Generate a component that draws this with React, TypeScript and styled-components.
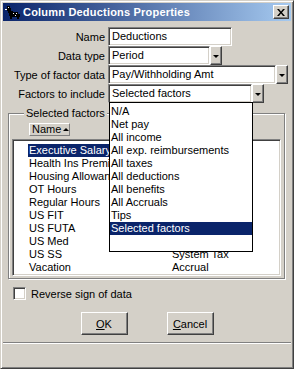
import styled, { createGlobalStyle } from 'styled-components';

const GlobalStyle = createGlobalStyle`
  html, body {
    margin: 0;
    padding: 0;
    background: #d4d0c8;
  }
  body {
    font-family: "Liberation Sans", Arial, sans-serif;
    font-size: 11px;
    color: #000;
  }
`;

const FACE = '#d4d0c8';

const Window = styled.div`
  box-sizing: border-box;
  width: 294px;
  height: 369px;
  background: ${FACE};
  border-style: solid;
  border-width: 1px;
  border-color: ${FACE} #404040 #404040 ${FACE};
  box-shadow: inset 1px 1px 0 #fff, inset -1px -1px 0 #808080;
  padding: 2px;
  display: flex;
  flex-direction: column;
`;

const TitleBar = styled.div`
  height: 18px;
  display: flex;
  align-items: center;
  padding: 0 2px 0 2px;
  background: linear-gradient(to right, #0a246a, #a6caf0);
  color: #fff;
  font-weight: bold;
  font-size: 11px;
`;

const TitleText = styled.span`
  flex: 1;
  margin-left: 2px;
  letter-spacing: 0.2px;
`;

const CloseButton = styled.div`
  box-sizing: border-box;
  width: 16px;
  height: 14px;
  background: ${FACE};
  border: 1px solid;
  border-color: #fff #404040 #404040 #fff;
  box-shadow: inset -1px -1px 0 #808080;
  display: flex;
  align-items: center;
  justify-content: center;
`;

const Body = styled.div`
  flex: 1;
  display: flex;
  flex-direction: column;
  padding-top: 6px;
`;

const Form = styled.div`
  display: grid;
  grid-template-columns: 102px auto;
  column-gap: 3px;
  grid-auto-rows: 19px;
  align-items: center;
`;

const Label = styled.div`
  text-align: right;
  white-space: nowrap;
`;

const FieldWrap = styled.div`
  position: relative;
  display: flex;
  height: 19px;
`;

const Field = styled.div<{ $w: number }>`
  box-sizing: border-box;
  width: ${(p) => p.$w}px;
  height: 19px;
  background: #fff;
  border: 1px solid;
  border-color: #808080 #fff #fff #808080;
  box-shadow: inset 1px 1px 0 #404040, inset -1px -1px 0 ${FACE};
  padding: 0 3px;
  line-height: 17px;
  white-space: nowrap;
  overflow: hidden;
`;

const DropButton = styled.div`
  box-sizing: border-box;
  width: 12px;
  height: 19px;
  background: ${FACE};
  border: 1px solid;
  border-color: #fff #404040 #404040 #fff;
  box-shadow: inset -1px -1px 0 #808080;
  display: flex;
  align-items: center;
  justify-content: center;
`;

const Arrow = styled.div`
  width: 0;
  height: 0;
  border-left: 3px solid transparent;
  border-right: 3px solid transparent;
  border-top: 3px solid #000;
  margin-top: 1px;
`;

const Popup = styled.div`
  position: absolute;
  top: 18px;
  left: 1px;
  box-sizing: border-box;
  width: 144px;
  height: 150px;
  background: #fff;
  border: 1px solid #000;
  padding-top: 2px;
  z-index: 5;
`;

const PopupItem = styled.div<{ $sel?: boolean }>`
  height: 13px;
  line-height: 13px;
  padding-left: 1px;
  white-space: nowrap;
  background: ${(p) => (p.$sel ? '#0a246a' : 'transparent')};
  color: ${(p) => (p.$sel ? '#fff' : '#000')};
`;

const GroupBox = styled.div`
  position: relative;
  box-sizing: border-box;
  margin: 10px 6px 0 5px;
  height: 166px;
  border: 1px solid #808080;
  box-shadow: inset 1px 1px 0 #fff, 1px 1px 0 #fff;
  padding: 9px 3px 2px 3px;
  display: flex;
  flex-direction: column;
`;

const GroupLabel = styled.div`
  position: absolute;
  top: -7px;
  left: 15px;
  padding: 0 2px;
  background: ${FACE};
  line-height: 13px;
`;

const HeaderButton = styled.div`
  box-sizing: border-box;
  align-self: flex-start;
  margin-left: 17px;
  width: 41px;
  height: 13px;
  background: ${FACE};
  border: 1px solid;
  border-color: #fff #808080 #808080 #fff;
  display: flex;
  align-items: center;
  padding-left: 2px;
  line-height: 11px;
  gap: 2px;
`;

const UpArrow = styled.span`
  width: 0;
  height: 0;
  border-left: 3px solid transparent;
  border-right: 3px solid transparent;
  border-bottom: 3px solid #000;
`;

const ListBox = styled.div`
  box-sizing: border-box;
  margin-top: 3px;
  flex: 1;
  background: #fff;
  border: 1px solid;
  border-color: #808080 #fff #fff #808080;
  box-shadow: inset 1px 1px 0 #404040, inset -1px -1px 0 ${FACE};
  padding: 4px 0 0 15px;
  overflow: hidden;
`;

const ListRow = styled.div`
  display: grid;
  grid-template-columns: 144px auto;
  height: 13px;
  line-height: 13px;
  white-space: nowrap;
`;

/* the dropdown covers the rest of the name column, so clip there */
const NameCell = styled.div`
  width: 81px;
  overflow: hidden;
`;

const ListName = styled.span<{ $sel?: boolean }>`
  display: inline-block;
  padding-left: 1px;
  padding-right: 1px;
  background: ${(p) => (p.$sel ? '#0a246a' : 'transparent')};
  color: ${(p) => (p.$sel ? '#fff' : '#000')};
`;

const CheckRow = styled.label`
  display: flex;
  align-items: center;
  gap: 5px;
  margin: 8px 0 0 10px;
  height: 13px;
`;

const CheckBox = styled.span`
  box-sizing: border-box;
  width: 13px;
  height: 13px;
  background: #fff;
  border: 1px solid;
  border-color: #808080 #fff #fff #808080;
  box-shadow: inset 1px 1px 0 #404040, inset -1px -1px 0 ${FACE};
`;

const ButtonRow = styled.div`
  display: flex;
  justify-content: center;
  gap: 39px;
  margin-top: 12px;
`;

const PushButton = styled.div`
  box-sizing: border-box;
  width: 47px;
  height: 23px;
  background: ${FACE};
  border: 1px solid;
  border-color: #fff #404040 #404040 #fff;
  box-shadow: inset -1px -1px 0 #808080;
  display: flex;
  align-items: center;
  justify-content: center;
`;

const Separator = styled.div`
  margin: 7px 0 0 0;
  height: 1px;
  background: #808080;
  border-bottom: 1px solid #fff;
`;

const factorOptions = [
  'N/A',
  'Net pay',
  'All income',
  'All exp. reimbursements',
  'All taxes',
  'All deductions',
  'All benefits',
  'All Accruals',
  'Tips',
  'Selected factors',
];

const factors = [
  { name: 'Executive Salary', type: '' },
  { name: 'Health Ins Premium', type: '' },
  { name: 'Housing Allowance', type: '' },
  { name: 'OT Hours', type: '' },
  { name: 'Regular Hours', type: '' },
  { name: 'US FIT', type: '' },
  { name: 'US FUTA', type: '' },
  { name: 'US Med', type: '' },
  { name: 'US SS', type: 'System Tax' },
  { name: 'Vacation', type: 'Accrual' },
];

const AppIcon = () => (
  <svg width="16" height="16" viewBox="0 0 16 16">
    <path d="M2 2h3v2h1v3h2v1h5v2h2v3h-1v2h-2v-2h-5v2h-2v-3h-1v-3h-1v-2h-1z" fill="#000" />
    <path d="M3 3h1v1h-1zM8 9h1v1h-1zM11 9h1v1h-1zM10 11h1v1h-1z" fill="#fff" />
    <path d="M0 5h2v1h-2z" fill="#fff" />
  </svg>
);

const CloseGlyph = () => (
  <svg width="8" height="7" viewBox="0 0 8 7">
    <path d="M0 0h2l2 2.5l2-2.5h2l-3 3.5l3 3.5h-2l-2-2.5l-2 2.5h-2l3-3.5z" fill="#000" />
  </svg>
);

const Combo = ({ value, width }: { value: string; width: number }) => (
  <>
    <Field $w={width}>{value}</Field>
    <DropButton>
      <Arrow />
    </DropButton>
  </>
);

export default function App() {
  return (
    <>
      <GlobalStyle />
      <Window>
        <TitleBar>
          <AppIcon />
          <TitleText>Column Deductions Properties</TitleText>
          <CloseButton>
            <CloseGlyph />
          </CloseButton>
        </TitleBar>
        <Body>
          <Form>
            <Label>Name</Label>
            <FieldWrap>
              <Field $w={124}>Deductions</Field>
            </FieldWrap>
            <Label>Data type</Label>
            <FieldWrap>
              <Combo value="Period" width={102} />
            </FieldWrap>
            <Label>Type of factor data</Label>
            <FieldWrap>
              <Combo value="Pay/Withholding Amt" width={168} />
            </FieldWrap>
            <Label>Factors to include</Label>
            <FieldWrap>
              <Combo value="Selected factors" width={144} />
              <Popup>
                {factorOptions.map((o) => (
                  <PopupItem key={o} $sel={o === 'Selected factors'}>
                    {o}
                  </PopupItem>
                ))}
              </Popup>
            </FieldWrap>
          </Form>
          <GroupBox>
            <GroupLabel>Selected factors</GroupLabel>
            <HeaderButton>
              <span>Name</span>
              <UpArrow />
            </HeaderButton>
            <ListBox>
              {factors.map((f, i) => (
                <ListRow key={f.name}>
                  <NameCell>
                    <ListName $sel={i === 0}>{f.name}</ListName>
                  </NameCell>
                  <span>{f.type}</span>
                </ListRow>
              ))}
            </ListBox>
          </GroupBox>
          <CheckRow>
            <CheckBox />
            <span>Reverse sign of data</span>
          </CheckRow>
          <ButtonRow>
            <PushButton>
              <span>
                <u>O</u>K
              </span>
            </PushButton>
            <PushButton>
              <span>
                <u>C</u>ancel
              </span>
            </PushButton>
          </ButtonRow>
          <Separator />
        </Body>
      </Window>
    </>
  );
}
